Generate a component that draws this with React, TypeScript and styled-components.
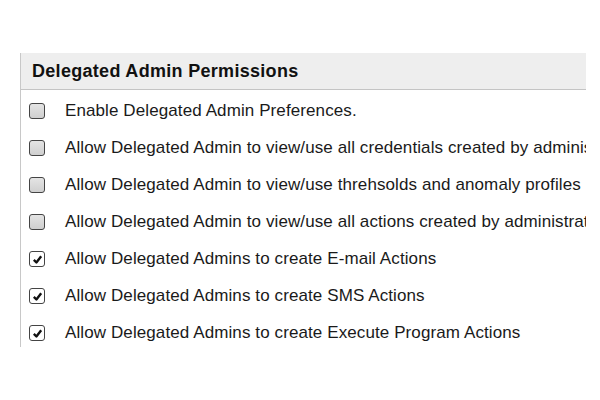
import React from 'react';
import styled, { createGlobalStyle } from 'styled-components';

const GlobalStyle = createGlobalStyle`
  html, body {
    margin: 0;
    padding: 0;
    background: #ffffff;
  }
  body {
    font-family: "Liberation Sans", Arial, sans-serif;
    color: #1a1a1a;
  }
`;

const Page = styled.div`
  width: 600px;
  height: 400px;
  padding: 53px 15px 0 20px;
  box-sizing: border-box;
`;

const Panel = styled.section`
  width: 565px;
  height: 294px;
  border-left: 1px solid #c8c8c8;
  overflow: hidden;
`;

const Header = styled.div`
  height: 36px;
  background: #eeeeee;
  border-bottom: 1px solid #c4c4c4;
  display: flex;
  align-items: center;
  padding-left: 11px;
  font-size: 18px;
  font-weight: bold;
  letter-spacing: 0.3px;
  color: #111;
`;

const List = styled.div`
  display: flex;
  flex-direction: column;
  padding-top: 2px;
`;

const Row = styled.label`
  height: 37px;
  flex-shrink: 0;
  display: flex;
  align-items: center;
  gap: 20px;
  padding-left: 8px;
  white-space: nowrap;
  font-size: 17px;
  letter-spacing: 0.1px;
  color: #1a1a1a;
`;

const Box = styled.span<{ $checked: boolean }>`
  width: 14px;
  height: 14px;
  flex-shrink: 0;
  border: 1px solid #444;
  border-radius: 3px;
  background: ${p => (p.$checked ? '#ffffff' : 'linear-gradient(180deg, #e4e4e4 0%, #cfcfcf 100%)')};
  display: flex;
  align-items: center;
  justify-content: center;
  margin-top: 1px;

  svg {
    width: 11px;
    height: 11px;
  }
`;

const items = [
  { text: 'Enable Delegated Admin Preferences.', checked: false },
  { text: 'Allow Delegated Admin to view/use all credentials created by administrators', checked: false },
  { text: 'Allow Delegated Admin to view/use threhsolds and anomaly profiles', checked: false },
  { text: 'Allow Delegated Admin to view/use all actions created by administrators', checked: false },
  { text: 'Allow Delegated Admins to create E-mail Actions', checked: true },
  { text: 'Allow Delegated Admins to create SMS Actions', checked: true },
  { text: 'Allow Delegated Admins to create Execute Program Actions', checked: true },
];

export default function App() {
  return (
    <>
      <GlobalStyle />
      <Page>
        <Panel>
          <Header>Delegated Admin Permissions</Header>
          <List>
            {items.map(item => (
              <Row key={item.text}>
                <Box $checked={item.checked}>
                  {item.checked && (
                    <svg viewBox="0 0 12 12">
                      <path d="M2 6.5 L4.8 9.3 L10 2.5" fill="none" stroke="#111" strokeWidth={2.6} strokeLinejoin="round" />
                    </svg>
                  )}
                </Box>
                {item.text}
              </Row>
            ))}
          </List>
        </Panel>
      </Page>
    </>
  );
}
